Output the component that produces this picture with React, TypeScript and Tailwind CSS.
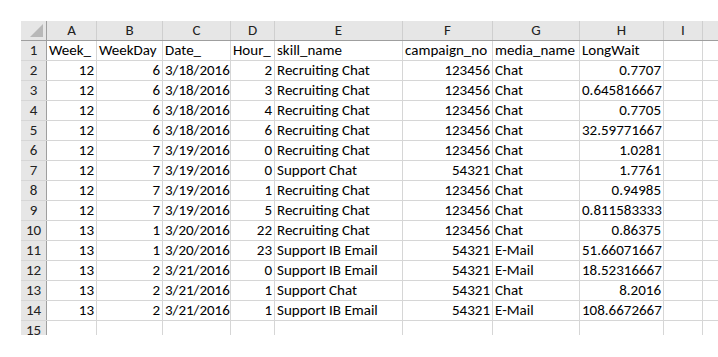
import React from "react";

const widths = [26, 50, 66, 68, 44, 128, 90, 87, 84, 39];
const letters = ["A", "B", "C", "D", "E", "F", "G", "H", "I"];

const header = ["Week_", "WeekDay", "Date_", "Hour_", "skill_name", "campaign_no", "media_name", "LongWait", ""];
const data: string[][] = [
  ["12", "6", "3/18/2016", "2", "Recruiting Chat", "123456", "Chat", "0.7707"],
  ["12", "6", "3/18/2016", "3", "Recruiting Chat", "123456", "Chat", "0.645816667"],
  ["12", "6", "3/18/2016", "4", "Recruiting Chat", "123456", "Chat", "0.7705"],
  ["12", "6", "3/18/2016", "6", "Recruiting Chat", "123456", "Chat", "32.59771667"],
  ["12", "7", "3/19/2016", "0", "Recruiting Chat", "123456", "Chat", "1.0281"],
  ["12", "7", "3/19/2016", "0", "Support Chat", "54321", "Chat", "1.7761"],
  ["12", "7", "3/19/2016", "1", "Recruiting Chat", "123456", "Chat", "0.94985"],
  ["12", "7", "3/19/2016", "5", "Recruiting Chat", "123456", "Chat", "0.811583333"],
  ["13", "1", "3/20/2016", "22", "Recruiting Chat", "123456", "Chat", "0.86375"],
  ["13", "1", "3/20/2016", "23", "Support IB Email", "54321", "E-Mail", "51.66071667"],
  ["13", "2", "3/21/2016", "0", "Support IB Email", "54321", "E-Mail", "18.52316667"],
  ["13", "2", "3/21/2016", "1", "Support Chat", "54321", "Chat", "8.2016"],
  ["13", "2", "3/21/2016", "1", "Support IB Email", "54321", "E-Mail", "108.6672667"],
];
const rightCols = [0, 1, 3, 5, 7];

export default function App() {
  const font = { fontFamily: "Carlito, Lato, 'Liberation Sans', sans-serif" };
  const rows: string[][] = [header, ...data.map((d) => [...d, ""]), Array(9).fill("")];
  return (
    <div className="w-[718px] h-[357px] bg-white pl-[21px] pt-[21px]" style={font}>
      <div className="h-[314px] overflow-hidden text-[15px] leading-[20px] text-black">
        <div className="flex h-[20px] bg-[#e6e6e6] border-b border-[#9f9f9f]">
          <div className="w-[26px] shrink-0 border-r border-[#9f9f9f] relative">
            <div className="absolute right-[3px] bottom-[3px] w-0 h-0 border-l-[13px] border-l-transparent border-b-[13px] border-b-[#b8b8b8]" />
          </div>
          {letters.map((l, i) => (
            <div
              key={l}
              style={{ width: widths[i + 1] }}
              className="shrink-0 border-r border-[#cfcfcf] text-center text-[#222] leading-[19px]"
            >
              {l}
            </div>
          ))}
        </div>
        {rows.map((row, ri) => (
          <div key={ri} className="flex h-[20px] border-b border-[#d6d6d6]">
            <div className="w-[26px] shrink-0 bg-[#e6e6e6] border-r border-[#9f9f9f] text-center text-[#222] leading-[19px]">
              {ri + 1}
            </div>
            {row.map((v, ci) => (
              <div
                key={ci}
                style={{ width: widths[ci + 1] }}
                className={
                  "shrink-0 border-r border-[#d6d6d6] px-[2px] whitespace-nowrap overflow-hidden leading-[19px] " +
                  (ri > 0 && rightCols.includes(ci) ? "text-right" : "text-left")
                }
              >
                {v}
              </div>
            ))}
          </div>
        ))}
      </div>
    </div>
  );
}
